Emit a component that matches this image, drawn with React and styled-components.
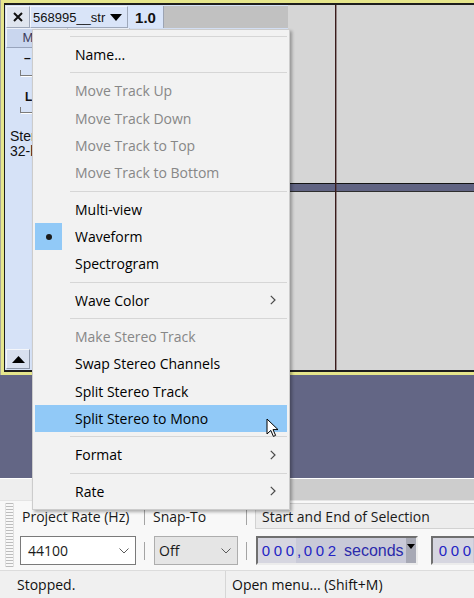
import React from "react";
import styled, { createGlobalStyle } from "styled-components";

const UI_FONT = `"Open Sans", "Noto Sans", sans-serif`;
const TRACK_FONT = `"Liberation Sans", Arial, sans-serif`;

const GlobalStyle = createGlobalStyle`
  html, body {
    margin: 0;
    padding: 0;
    background: #636685;
  }
  body {
    overflow: hidden;
  }
`;

const MENU = [
  { sep: true },
  { label: "Name..." },
  { sep: true },
  { label: "Move Track Up", disabled: true },
  { label: "Move Track Down", disabled: true },
  { label: "Move Track to Top", disabled: true },
  { label: "Move Track to Bottom", disabled: true },
  { sep: true },
  { label: "Multi-view" },
  { label: "Waveform", checked: true },
  { label: "Spectrogram" },
  { sep: true },
  { label: "Wave Color", sub: true },
  { sep: true },
  { label: "Make Stereo Track", disabled: true },
  { label: "Swap Stereo Channels" },
  { label: "Split Stereo Track" },
  { label: "Split Stereo to Mono", active: true },
  { sep: true },
  { label: "Format", sub: true },
  { sep: true },
  { label: "Rate", sub: true }
];

const Window = styled.div`
  position: relative;
  width: 474px;
  height: 598px;
  overflow: hidden;
  display: flex;
  flex-direction: column;
  background: #636685;
  font-family: ${UI_FONT};
`;

/* ---------- track ---------- */

const TrackFrame = styled.div`
  height: 375px;
  flex: none;
  box-sizing: border-box;
  padding: 3px 0 3px 3px;
  border-left: 1px solid #a9a99a;
  background: #e6e68c;
`;

const TrackBody = styled.div`
  height: 100%;
  box-sizing: border-box;
  display: flex;
  border: 2px solid #1d1d1d;
  border-left-width: 1px;
  border-right: none;
`;

const ControlPanel = styled.div`
  width: 283px;
  flex: none;
  box-sizing: border-box;
  padding: 1px 0 1px 1px;
  display: flex;
  flex-direction: column;
  background: #d6e2f7;
  font-family: ${TRACK_FONT};
  color: #111;
`;

const HeaderRow = styled.div`
  display: flex;
  height: 22px;
`;

const CloseButton = styled.div`
  width: 24px;
  box-sizing: border-box;
  display: flex;
  align-items: center;
  justify-content: center;
  background: #dfe5ef;
  border: 1px solid;
  border-color: #f4f6fa #9ea8ba #9ea8ba #f4f6fa;
`;

const NameButton = styled.div`
  width: 98px;
  box-sizing: border-box;
  display: flex;
  align-items: center;
  justify-content: space-between;
  padding: 0 5px 0 2px;
  background: #d9e4f8;
  border: 1px solid;
  border-color: #f2f5fb #9ea8ba #9ea8ba #f2f5fb;
  font-size: 13px;
`;

const RulerLabel = styled.div`
  width: 36px;
  box-sizing: border-box;
  display: flex;
  align-items: center;
  justify-content: center;
  background: #d9e5fa;
  border-right: 1px solid #9ca4b4;
  font-weight: bold;
  font-size: 15px;
`;

const HeaderFill = styled.div`
  flex: 1;
  background: #c1c1c1;
`;

const ButtonRow = styled.div`
  display: flex;
  height: 20px;
`;

const ToggleButton = styled.div`
  width: 62px;
  box-sizing: border-box;
  text-align: center;
  line-height: 18px;
  font-size: 13px;
  color: #3b3b5c;
  background: #c9d6ee;
  border: 1px solid;
  border-color: #eef2fa #98a4bc #98a4bc #eef2fa;
`;

const SliderBlock = styled.div`
  padding-left: 14px;
  margin-top: ${p => p.$top}px;
`;

const SliderLabel = styled.div`
  font-size: 12px;
  font-weight: bold;
  line-height: 12px;
  height: 12px;
  padding-left: ${p => p.$indent || 0}px;
`;

const SliderTrack = styled.div`
  margin-top: ${p => p.$gap}px;
  width: 120px;
  height: 5px;
  border-left: 1px solid #7c7c7c;
  border-bottom: 1px solid #7c7c7c;
  box-shadow: 1px 1px 0 #ffffff;
`;

const InfoText = styled.div`
  margin-top: 16px;
  padding-left: 4px;
  font-size: 14px;
  line-height: 15px;
`;

const CollapseButton = styled.div`
  margin-top: auto;
  width: 24px;
  height: 20px;
  box-sizing: border-box;
  display: flex;
  align-items: center;
  justify-content: center;
  background: #d8e0ef;
  border: 1px solid;
  border-color: #f4f6fa #8c96a8 #8c96a8 #f4f6fa;
`;

const WaveArea = styled.div`
  position: relative;
  flex: 1;
  display: flex;
  flex-direction: column;
  background: #d6d6d6;

  &::after {
    content: "";
    position: absolute;
    left: 47px;
    top: 0;
    bottom: 0;
    width: 1px;
    background: #3a1c1c;
    box-shadow: 1px 0 0 rgba(70, 40, 40, 0.45);
  }
`;

const Channel = styled.div`
  flex: 1;
`;

const ChannelDivider = styled.div`
  height: 9px;
  box-sizing: border-box;
  background: #616483;
  border-top: 1px solid #141414;
  border-bottom: 1px solid #2e2e2e;
`;

const Backdrop = styled.div`
  flex: 1;
  background: #636685;
`;

/* ---------- scrollbar / toolbar / status ---------- */

const ScrollBar = styled.div`
  height: 22px;
  flex: none;
  box-sizing: border-box;
  display: flex;
  padding-left: 40px;
  background: #eeeeee;
  border-top: 1px solid #ffffff;
`;

const ScrollThumb = styled.div`
  flex: 1;
  background: #cdcdcd;
`;

const Toolbar = styled.div`
  height: 70px;
  flex: none;
  box-sizing: border-box;
  display: flex;
  padding: 2px 0 0 5px;
  background: #f8f8f8;
  border-top: 1px solid #e4e4e4;
`;

const Gripper = styled.div`
  width: 7px;
  flex: none;
  height: 64px;
  margin-right: 6px;
  background: repeating-linear-gradient(to bottom, #bcbcbc 0 1px, #f8f8f8 1px 3px);
  border-left: 1px solid #e0e0e0;
  border-right: 1px solid #e0e0e0;
`;

const Fields = styled.div`
  flex: 1;
  min-width: 0;
  display: grid;
  grid-template-columns: 116px 17px 85px 17px minmax(0, 1fr);
  grid-template-rows: 26px 29px;
  row-gap: 7px;
  align-items: center;
  font-size: 14px;
  color: #1a1a1a;
`;

const FieldLabel = styled.div`
  padding-left: ${p => p.$pad}px;
  white-space: nowrap;
`;

const FieldSep = styled.div`
  justify-self: center;
  width: 1px;
  height: 18px;
  background: #a4a4a4;
`;

const Combo = styled.div`
  height: 29px;
  box-sizing: border-box;
  display: flex;
  align-items: center;
  justify-content: space-between;
  padding: 0 6px 0 ${p => (p.$plain ? 7 : 4)}px;
  margin-left: ${p => (p.$plain ? 0 : 1)}px;
  background: ${p => (p.$plain ? "#ffffff" : "#e5e5e5")};
  border: 1px solid ${p => (p.$plain ? "#7a7a7a" : "#adadad")};
`;

const SelectionLabel = styled.div`
  height: 26px;
  box-sizing: border-box;
  display: flex;
  align-items: center;
  padding-left: 6px;
  white-space: nowrap;
  overflow: hidden;
  background: #ededed;
  border: 1px solid #d2d2d2;
  border-right: none;
`;

const TimeRow = styled.div`
  display: flex;
  gap: 13px;
  padding-left: 1px;
  overflow: hidden;
  white-space: nowrap;
`;

const TimeControl = styled.div`
  width: ${p => p.$w}px;
  flex: none;
  height: 29px;
  box-sizing: border-box;
  display: flex;
  align-items: stretch;
  border: 2px solid;
  border-color: #6f6f6f #ececec #ececec #6f6f6f;
  background: #c9cad8;
  font-family: ${TRACK_FONT};
  font-size: 15px;
  color: #2424c4;
`;

const TimePart = styled.span`
  display: flex;
  align-items: center;
  padding-left: ${p => p.$pad || 0}px;
  background: ${p => (p.$light ? "#d6d6e0" : "transparent")};
`;

const Digit = styled.span`
  width: 12px;
  text-align: center;
`;

const Comma = styled.span`
  width: 6px;
  text-align: center;
`;

const Units = styled.span`
  display: flex;
  align-items: center;
  margin-left: 6px;
  font-size: 16px;
  color: #2b2bab;
`;

const UnitsDrop = styled.span`
  margin-left: auto;
  width: 10px;
  display: flex;
  align-items: flex-start;
  justify-content: center;
  padding-top: 6px;
  background: #a7a9b5;
`;

const StatusBar = styled.div`
  height: 28px;
  flex: none;
  box-sizing: border-box;
  display: flex;
  background: #f0f0f0;
  border-top: 1px solid #dcdcdc;
  font-size: 14px;
  color: #111;
`;

const StatusField = styled.div`
  width: ${p => p.$w || "auto"};
  flex: ${p => (p.$w ? "none" : 1)};
  display: flex;
  align-items: center;
  padding-left: ${p => p.$pad}px;
  box-sizing: border-box;
  border-right: ${p => (p.$w ? "1px solid #d6d6d6" : "none")};
  white-space: nowrap;
`;

/* ---------- popup menu ---------- */

const Menu = styled.div`
  position: absolute;
  left: 32px;
  top: 29px;
  width: 258px;
  box-sizing: border-box;
  padding: 2px 2px 4px;
  background: #f2f2f2;
  border: 1px solid #cccccc;
  box-shadow: 2px 2px 3px rgba(0, 0, 0, 0.3);
  font-size: 14px;
`;

const MenuItem = styled.div`
  display: flex;
  align-items: center;
  height: 27.33px;
  background: ${p => (p.$active ? "#91c9f7" : "transparent")};
  color: ${p => (p.$disabled ? "#878787" : "#000000")};
`;

const CheckCell = styled.span`
  width: 27px;
  height: 100%;
  flex: none;
  display: flex;
  align-items: center;
  justify-content: center;
  background: ${p => (p.$on ? "#91c9f7" : "transparent")};
`;

const Bullet = styled.span`
  width: 6px;
  height: 6px;
  border-radius: 50%;
  background: #1b1b1b;
`;

const ItemText = styled.span`
  flex: 1;
  padding-left: 13px;
  white-space: nowrap;
`;

const SubArrow = styled.span`
  display: flex;
  margin-right: 11px;
`;

const MenuSep = styled.div`
  height: 9px;
  display: flex;
  align-items: center;
  padding-left: 35px;

  &::after {
    content: "";
    flex: 1;
    height: 1px;
    background: #d6d6d6;
  }
`;

const Pointer = styled.svg`
  position: absolute;
  left: 266px;
  top: 418px;
`;

const Chevron = () => (
  <svg width="10" height="6" viewBox="0 0 10 6">
    <polyline points="0.5,0.5 5,5 9.5,0.5" fill="none" stroke="#5a5a5a" strokeWidth="1" />
  </svg>
);

const Digits = ({ value }) =>
  value.split("").map((c, i) => <Digit key={i}>{c}</Digit>);

export default function App() {
  return (
    <Window>
      <GlobalStyle />
      <TrackFrame>
        <TrackBody>
          <ControlPanel>
            <HeaderRow>
              <CloseButton>
                <svg width="10" height="10" viewBox="0 0 10 10">
                  <path d="M1 1L9 9M9 1L1 9" stroke="#111" strokeWidth="2" />
                </svg>
              </CloseButton>
              <NameButton>
                <span>568995__str</span>
                <svg width="12" height="7" viewBox="0 0 12 7">
                  <polygon points="0,0 12,0 6,7" fill="#000" />
                </svg>
              </NameButton>
              <RulerLabel>1.0</RulerLabel>
              <HeaderFill />
            </HeaderRow>
            <ButtonRow>
              <ToggleButton>Mute</ToggleButton>
              <ToggleButton>Solo</ToggleButton>
            </ButtonRow>
            <SliderBlock $top={4}>
              <SliderLabel $indent={4}>–</SliderLabel>
              <SliderTrack $gap={6} />
            </SliderBlock>
            <SliderBlock $top={15}>
              <SliderLabel $indent={5}>L</SliderLabel>
              <SliderTrack $gap={4} />
            </SliderBlock>
            <InfoText>
              Stereo, 44100Hz
              <br />
              32-bit float
            </InfoText>
            <CollapseButton>
              <svg width="13" height="7" viewBox="0 0 13 7">
                <polygon points="0,7 13,7 6.5,0" fill="#000" />
              </svg>
            </CollapseButton>
          </ControlPanel>
          <WaveArea>
            <Channel />
            <ChannelDivider />
            <Channel />
          </WaveArea>
        </TrackBody>
      </TrackFrame>

      <Backdrop />

      <ScrollBar>
        <ScrollThumb />
      </ScrollBar>

      <Toolbar>
        <Gripper />
        <Fields>
          <FieldLabel $pad={2}>Project Rate (Hz)</FieldLabel>
          <FieldSep />
          <FieldLabel $pad={0}>Snap-To</FieldLabel>
          <FieldSep />
          <SelectionLabel>Start and End of Selection</SelectionLabel>

          <Combo $plain>
            <span>44100</span>
            <Chevron />
          </Combo>
          <FieldSep />
          <Combo>
            <span>Off</span>
            <Chevron />
          </Combo>
          <FieldSep />
          <TimeRow>
            <TimeControl $w={162}>
              <TimePart $light $pad={2}>
                <Digits value="000" />
              </TimePart>
              <TimePart>
                <Comma>,</Comma>
                <Digits value="002" />
                <Units>seconds</Units>
              </TimePart>
              <UnitsDrop>
                <svg width="8" height="5" viewBox="0 0 8 5">
                  <polygon points="0,0 8,0 4,5" fill="#000" />
                </svg>
              </UnitsDrop>
            </TimeControl>
            <TimeControl $w={162}>
              <TimePart $light $pad={4}>
                <Digits value="000" />
              </TimePart>
            </TimeControl>
          </TimeRow>
        </Fields>
      </Toolbar>

      <StatusBar>
        <StatusField $w="226px" $pad={17}>
          Stopped.
        </StatusField>
        <StatusField $pad={6}>Open menu... (Shift+M)</StatusField>
      </StatusBar>

      <Menu>
        {MENU.map((item, i) =>
          item.sep ? (
            <MenuSep key={i} />
          ) : (
            <MenuItem key={i} $active={item.active} $disabled={item.disabled}>
              <CheckCell $on={item.checked}>{item.checked && <Bullet />}</CheckCell>
              <ItemText>{item.label}</ItemText>
              {item.sub && (
                <SubArrow>
                  <svg width="6" height="10" viewBox="0 0 6 10">
                    <polyline points="0.8,0.8 5,5 0.8,9.2" fill="none" stroke="#4a4a4a" strokeWidth="1.2" />
                  </svg>
                </SubArrow>
              )}
            </MenuItem>
          )
        )}
      </Menu>

      <Pointer width="13" height="20" viewBox="0 0 13 20">
        <path
          d="M1 1L1 16L4.8 12.4L7.4 18.4L9.6 17.4L7 11.6L12 11.6Z"
          fill="#ffffff"
          stroke="#000000"
          strokeWidth="1"
          strokeLinejoin="round"
        />
      </Pointer>
    </Window>
  );
}
